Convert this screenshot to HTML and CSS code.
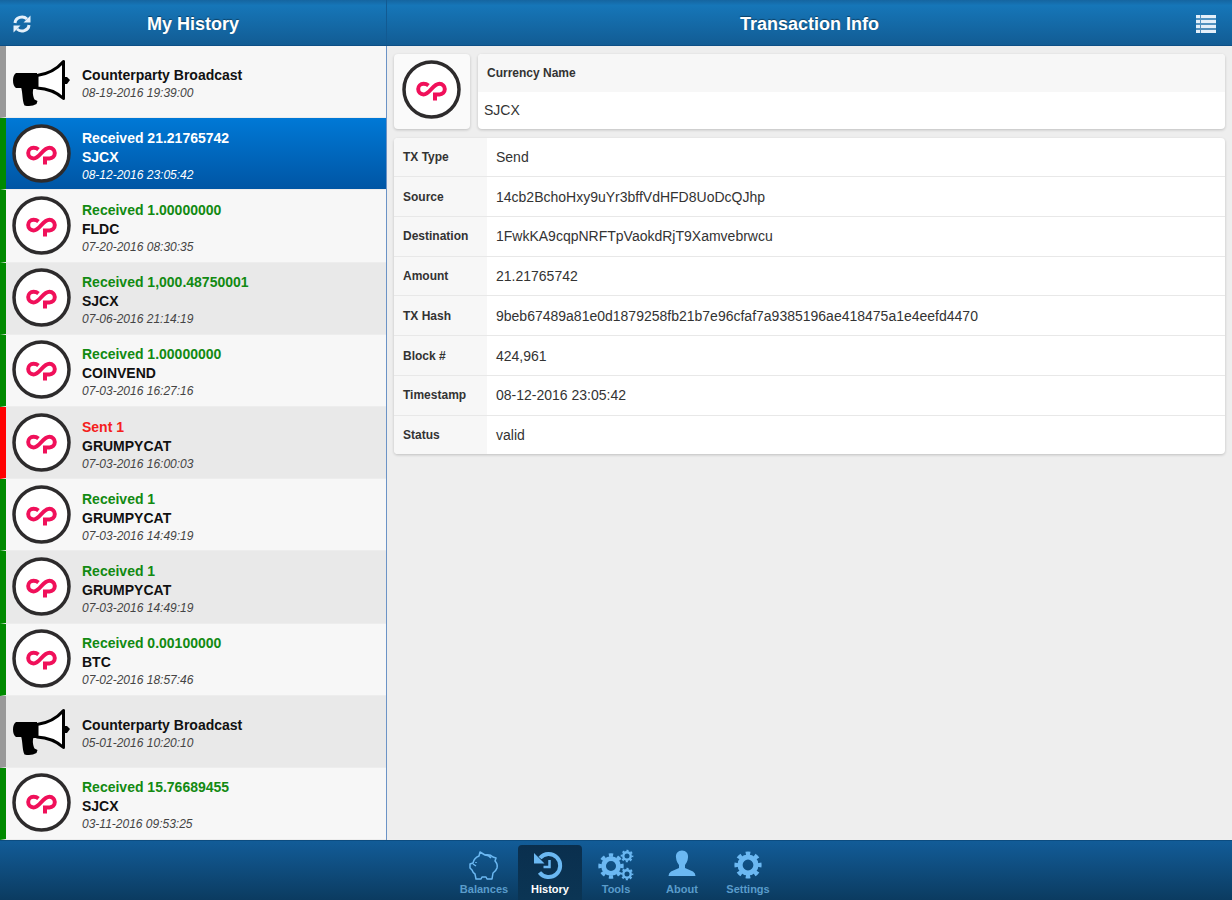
FILE: index.html
```
<!DOCTYPE html>
<html lang="en">
<head>
    <meta charset="utf-8">
    <title>My History</title>
    <link rel="stylesheet" href="styles.css">
</head>
<body>
    <svg class="defs" aria-hidden="true">
        <symbol id="coin" viewBox="0 0 60 60">
            <circle cx="29.500" cy="29.500" r="27.500" fill="#fff" stroke="#2d2b2c" stroke-width="3.500"/>
            <path d="M26.500 25.500C25 24.300 23.500 23.800 21.500 23.800a5.300 5.300 0 0 0 0 10.600c6.500 0 9-10.600 16-10.600a5.300 5.300 0 0 1 0 10.600h-4.500v6" fill="none" stroke="#f0105a" stroke-width="4"/>
        </symbol>
        <symbol id="horn" viewBox="0 0 60 60">
            <path d="M25 23.500C36 22 45 17 51.500 9.500V46.500C45 40.500 36 36.500 25 36z" fill="#fff" stroke="#000" stroke-width="3" stroke-linejoin="round"/>
            <path d="M4 21h21v16H11v-1H4q-3-2-3-7.500T4 21z"/>
            <path d="M9 35h13c-2 5-1 9 .5 12.500l3 1.500-1 3q-5 3-12 1.500C10 48 11 42 9 35z"/>
            <path d="M52 25h3l3 3-3 4h-3z"/>
        </symbol>
        <symbol id="gear" viewBox="0 0 32 32">
            <circle cx="16" cy="16" r="8.500" fill="none" stroke="currentColor" stroke-width="5.500"/>
            <circle cx="16" cy="16" r="12.500" fill="none" stroke="currentColor" stroke-width="4" pathLength="16" stroke-dasharray="1 1" stroke-dashoffset="0.500"/>
        </symbol>
    </svg>

    <header class="topbar">
        <div class="topbar-left">
            <button class="icon-btn" aria-label="Refresh">
                <svg width="20" height="20" viewBox="0 0 20 20" fill="none" stroke="currentColor" stroke-width="3">
                    <path d="M3 9a7 6.500 0 0 1 12-4M17 11a7 6.500 0 0 1-12 4"/>
                    <path d="M18.500 1.500v7h-7zM1.500 18.500v-7h7z" fill="currentColor" stroke="none"/>
                </svg>
            </button>
            <h1>My History</h1>
        </div>
        <div class="topbar-right">
            <h1>Transaction Info</h1>
            <button class="icon-btn" aria-label="Menu">
                <svg width="20" height="18" viewBox="0 0 20 18" fill="currentColor">
                    <path d="M0 0h4v3H0zM5 0h15v3H5zM0 5h4v3H0zM5 5h15v3H5zM0 10h4v3H0zM5 10h15v3H5zM0 15h4v3H0zM5 15h15v3H5z"/>
                    <path d="M0 0h20v18H0z" opacity=".3"/>
                </svg>
            </button>
        </div>
    </header>

    <main class="content">
        <ul class="history">
            <li><button class="tx broadcast">
                <svg class="tx-icon"><use href="#horn"/></svg>
                <span class="tx-text"><b>Counterparty Broadcast</b><i>08-19-2016 19:39:00</i></span>
            </button></li>
            <li><button class="tx received selected">
                <svg class="tx-icon"><use href="#coin"/></svg>
                <span class="tx-text"><b class="amount">Received 21.21765742</b><b>SJCX</b><i>08-12-2016 23:05:42</i></span>
            </button></li>
            <li><button class="tx received">
                <svg class="tx-icon"><use href="#coin"/></svg>
                <span class="tx-text"><b class="amount">Received 1.00000000</b><b>FLDC</b><i>07-20-2016 08:30:35</i></span>
            </button></li>
            <li><button class="tx received">
                <svg class="tx-icon"><use href="#coin"/></svg>
                <span class="tx-text"><b class="amount">Received 1,000.48750001</b><b>SJCX</b><i>07-06-2016 21:14:19</i></span>
            </button></li>
            <li><button class="tx received">
                <svg class="tx-icon"><use href="#coin"/></svg>
                <span class="tx-text"><b class="amount">Received 1.00000000</b><b>COINVEND</b><i>07-03-2016 16:27:16</i></span>
            </button></li>
            <li><button class="tx sent">
                <svg class="tx-icon"><use href="#coin"/></svg>
                <span class="tx-text"><b class="amount">Sent 1</b><b>GRUMPYCAT</b><i>07-03-2016 16:00:03</i></span>
            </button></li>
            <li><button class="tx received">
                <svg class="tx-icon"><use href="#coin"/></svg>
                <span class="tx-text"><b class="amount">Received 1</b><b>GRUMPYCAT</b><i>07-03-2016 14:49:19</i></span>
            </button></li>
            <li><button class="tx received">
                <svg class="tx-icon"><use href="#coin"/></svg>
                <span class="tx-text"><b class="amount">Received 1</b><b>GRUMPYCAT</b><i>07-03-2016 14:49:19</i></span>
            </button></li>
            <li><button class="tx received">
                <svg class="tx-icon"><use href="#coin"/></svg>
                <span class="tx-text"><b class="amount">Received 0.00100000</b><b>BTC</b><i>07-02-2016 18:57:46</i></span>
            </button></li>
            <li><button class="tx broadcast">
                <svg class="tx-icon"><use href="#horn"/></svg>
                <span class="tx-text"><b>Counterparty Broadcast</b><i>05-01-2016 10:20:10</i></span>
            </button></li>
            <li><button class="tx received">
                <svg class="tx-icon"><use href="#coin"/></svg>
                <span class="tx-text"><b class="amount">Received 15.76689455</b><b>SJCX</b><i>03-11-2016 09:53:25</i></span>
            </button></li>
        </ul>

        <section class="info">
            <div class="currency">
                <div class="card logo"><svg class="tx-icon"><use href="#coin"/></svg></div>
                <dl class="card name">
                    <dt>Currency Name</dt>
                    <dd>SJCX</dd>
                </dl>
            </div>
            <div class="card">
                <table class="details">
                    <tr><th scope="row">TX Type</th><td>Send</td></tr>
                    <tr><th scope="row">Source</th><td>14cb2BchoHxy9uYr3bffVdHFD8UoDcQJhp</td></tr>
                    <tr><th scope="row">Destination</th><td>1FwkKA9cqpNRFTpVaokdRjT9Xamvebrwcu</td></tr>
                    <tr><th scope="row">Amount</th><td>21.21765742</td></tr>
                    <tr><th scope="row">TX Hash</th><td>9beb67489a81e0d1879258fb21b7e96cfaf7a9385196ae418475a1e4eefd4470</td></tr>
                    <tr><th scope="row">Block #</th><td>424,961</td></tr>
                    <tr><th scope="row">Timestamp</th><td>08-12-2016 23:05:42</td></tr>
                    <tr><th scope="row">Status</th><td>valid</td></tr>
                </table>
            </div>
        </section>
    </main>

    <nav class="tabbar">
        <a href="#balances">
            <svg width="32" height="32" viewBox="0 0 32 32" fill="none" stroke="currentColor" stroke-width="1.500" stroke-linejoin="round">
                <path d="M11 7l1-4 5 3q5-1 8 2l3 1-1 3q3 3 2 7-1 3-4 5l-1 6h-5l-1-2h-4l-1 2H8l-1-5q-2-1-3-4l-2-2v-4l3-1q1-5 6-7z"/>
                <path d="M17 6q4 0 6 3M8 13v1M5 15l3 2" />
            </svg>
            <span>Balances</span>
        </a>
        <a href="#history" class="active">
            <svg width="32" height="32" viewBox="0 0 32 32" fill="none" stroke="currentColor" stroke-width="4">
                <path d="M6 9a11.500 11.500 0 1 1-.5 14.500"/>
                <path d="M0 4v10.500h10.500z" fill="currentColor" stroke="none"/>
                <path d="M15.500 11v7H9.500" stroke-width="2.500"/>
            </svg>
            <span>History</span>
        </a>
        <a href="#tools">
            <svg width="38" height="32" viewBox="0 0 38 32">
                <use href="#gear" x="0" y="3" width="28" height="28"/>
                <use href="#gear" x="23" y="0" width="14" height="14"/>
                <use href="#gear" x="23" y="18" width="14" height="14"/>
            </svg>
            <span>Tools</span>
        </a>
        <a href="#about">
            <svg width="32" height="32" viewBox="0 0 32 32" fill="currentColor">
                <path d="M16 1.500c4 0 6.500 3 6 7-.3 4-2 6-3 7.500v3l8 3.500q2.500 1.500 2.500 4.500h-27q0-3 2.500-4.500l8-3.500v-3c-1-1.500-2.700-3.500-3-7.500-.5-4 2-7 6-7z"/>
            </svg>
            <span>About</span>
        </a>
        <a href="#settings">
            <svg width="32" height="32"><use href="#gear" x="1" y="1" width="30" height="30"/></svg>
            <span>Settings</span>
        </a>
    </nav>
</body>
</html>
```
FILE: styles.css
```
* {
    box-sizing: border-box;
}

body {
    display: flex;
    flex-direction: column;
    min-height: 100vh;
    margin: 0;
    font-family: "Liberation Sans", Arial, sans-serif;
    background-color: #eee;
    color: #333;
}

button {
    border: none;
    background: none;
    font: inherit;
    color: inherit;
    cursor: pointer;
}

.defs {
    display: none;
}

/* top bar */
.topbar {
    display: flex;
    height: 46px;
    color: #fff;
    background: linear-gradient(#1565a0, #1676b8 12%, #125c94);
    border-bottom: 1px solid #0d4f86;
}

.topbar-left,
.topbar-right {
    display: flex;
    align-items: center;
    padding: 2px 16px 0 12px;
}

.topbar-left {
    width: 387px;
    border-right: 1px solid #125a92;
}

.topbar-right {
    flex: 1;
}

.topbar h1 {
    flex: 1;
    margin: 0;
    font-size: 18px;
    line-height: 22px;
    text-align: center;
    text-shadow: 0 -1px 1px rgba(0, 0, 0, 0.4);
}

.topbar-left h1 {
    padding-right: 16px;
}

.topbar-right h1 {
    padding-left: 24px;
}

.icon-btn {
    display: flex;
    padding: 0;
    color: #e4f0fa;
}

/* left list */
.content {
    display: flex;
    flex: 1;
}

.history {
    display: flex;
    flex-direction: column;
    width: 387px;
    margin: 0;
    padding: 0;
    list-style: none;
    border-right: 1px solid #6b93c6;
}

.history li {
    display: flex;
    flex: 1;
    background-color: #f7f7f7;
}

.history li:nth-child(even) {
    background-color: #e9e9e9;
}

.tx {
    display: flex;
    align-items: center;
    gap: 10px;
    width: 100%;
    padding: 0 6px;
    border-left: 6px solid #999;
    border-bottom: 1px solid #ededed;
    text-align: left;
}

.tx.received {
    border-left-color: #008a00;
}

.tx.sent {
    border-left-color: #f00;
}

.tx-icon {
    flex: none;
    width: 60px;
    height: 60px;
}

.tx-text {
    display: flex;
    flex-direction: column;
    padding-top: 4px;
    font-size: 14px;
    line-height: 19px;
    color: #111;
}

.tx-text i {
    font-size: 12px;
    line-height: 16px;
    color: #444;
}

.received .amount {
    color: #128a12;
}

.sent .amount {
    color: #f5201c;
}

.tx.selected {
    background: linear-gradient(#0079d6, #0055a4);
}

.selected .tx-text,
.selected .amount,
.selected i {
    color: #fff;
}

/* right side */
.info {
    flex: 1;
    padding: 8px 7px;
}

.currency {
    display: flex;
    gap: 8px;
    margin-bottom: 9px;
}

.card {
    overflow: hidden;
    margin: 0;
    background-color: #fff;
    border-radius: 4px;
    box-shadow: 0 1px 3px rgba(0, 0, 0, 0.2);
}

.logo {
    padding: 6px 8px 9px;
    background-color: #fafafa;
}

.logo svg {
    display: block;
}

.name {
    flex: 1;
}

.name dt {
    padding: 0 9px;
    font-size: 12px;
    font-weight: bold;
    line-height: 38px;
    background-color: #f7f7f7;
}

.name dd {
    margin: 0;
    padding: 0 6px;
    font-size: 14px;
    line-height: 37px;
}

.details {
    width: 100%;
    height: 316px;
    border-collapse: collapse;
}

.details th,
.details td {
    padding: 0 9px;
    border-bottom: 1px solid #e8e8e8;
    text-align: left;
}

.details th {
    width: 93px;
    font-size: 12px;
    background-color: #f7f7f7;
}

.details td {
    font-size: 14px;
}

.details tr:last-child > * {
    border-bottom: none;
}

/* bottom tabs */
.tabbar {
    display: flex;
    justify-content: center;
    gap: 2px;
    height: 60px;
    padding-top: 4px;
    background: linear-gradient(#125c98, #0b3b60);
    border-top: 1px solid #0c4c80;
}

.tabbar a {
    display: flex;
    flex-direction: column;
    align-items: center;
    width: 64px;
    padding-top: 4px;
    border-radius: 4px 4px 0 0;
    color: #6bb8f2;
    font-size: 11px;
    font-weight: bold;
    line-height: 16px;
    text-decoration: none;
}

.tabbar span {
    color: #5a9ccb;
}

.tabbar .active {
    background: linear-gradient(#0a2f4e, #0b3554);
}

.tabbar .active span {
    color: #fff;
}
```
